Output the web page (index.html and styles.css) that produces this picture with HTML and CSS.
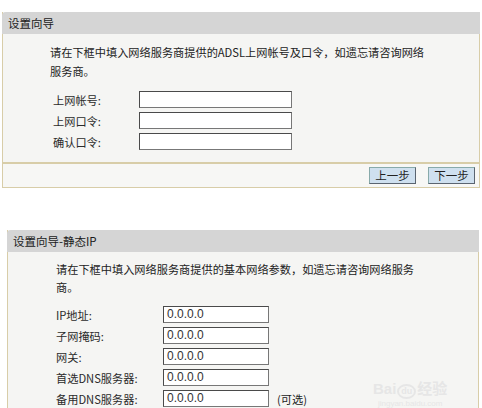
FILE: index.html
```html
<!DOCTYPE html>
<html lang="zh-CN">
<head>
<meta charset="utf-8">
<title>设置向导</title>
<link rel="stylesheet" href="styles.css">
</head>
<body>
<div class="page">
  <section class="panel panel-a">
    <div class="panel-head">设置向导</div>
    <div class="panel-body body-a">
      <p class="intro">请在下框中填入网络服务商提供的ADSL上网帐号及口令，如遗忘请咨询网络<br>服务商。</p>
      <div class="rows rows-a">
        <div class="row"><span class="label">上网帐号:</span><span class="field field-a"></span></div>
        <div class="row"><span class="label">上网口令:</span><span class="field field-a"></span></div>
        <div class="row"><span class="label">确认口令:</span><span class="field field-a"></span></div>
      </div>
    </div>
    <div class="panel-foot">
      <button class="btn">上一步</button>
      <button class="btn">下一步</button>
    </div>
  </section>

  <section class="panel panel-b">
    <div class="panel-head">设置向导-静态IP</div>
    <div class="panel-body body-b">
      <p class="intro intro-b">请在下框中填入网络服务商提供的基本网络参数，如遗忘请咨询网络服务<br>商。</p>
      <div class="rows rows-b">
        <div class="row"><span class="label label-b">IP地址:</span><span class="field field-b">0.0.0.0</span></div>
        <div class="row"><span class="label label-b">子网掩码:</span><span class="field field-b">0.0.0.0</span></div>
        <div class="row"><span class="label label-b">网关:</span><span class="field field-b">0.0.0.0</span></div>
        <div class="row"><span class="label label-b">首选DNS服务器:</span><span class="field field-b">0.0.0.0</span></div>
        <div class="row"><span class="label label-b">备用DNS服务器:</span><span class="field field-b">0.0.0.0</span><span class="note">(可选)</span></div>
      </div>
      <div class="watermark">
        <span class="wm-logo">Bai<span class="wm-du">du</span>经验</span>
        <span class="wm-url">jingyan.baidu.com</span>
      </div>
    </div>
  </section>
</div>
</body>
</html>
```

FILE: styles.css
```css
* { box-sizing: border-box; }
html, body {
  margin: 0;
  padding: 0;
  background: #ffffff;
  overflow: hidden;
}
body {
  font-family: "Noto Sans CJK SC", "Noto Sans", sans-serif;
  font-size: 11.2px;
  color: #222;
  width: 482px;
  height: 408px;
}
.page {
  display: flex;
  flex-direction: column;
}
.panel {
  border: 1px solid #d8cda8;
  border-top: none;
  background: #f5f5f3;
}
.panel-a {
  margin: 12px 2px 0 2px;
}
.panel-b {
  margin: 42px 3px 0 7px;
  height: 178px;
  position: relative;
  border-bottom: none;
}
.panel-head {
  height: 22px;
  background: #d5d5d5;
  border-radius: 4px 0 0 0;
  margin: 0 -1px;
  padding-left: 6px;
  line-height: 22px;
  font-size: 11.5px;
  color: #1a1a1a;
}
.panel-body {
  padding: 9px 0 0 47px;
}
.body-a {
  height: 128px;
}
.body-b {
  padding: 8px 0 0 48px;
}
.intro {
  margin: 0;
  line-height: 19px;
}
.intro-b {
  line-height: 18px;
}
.rows {
  display: flex;
  flex-direction: column;
  gap: 4px;
}
.rows-a {
  margin-top: 10px;
  padding-left: 3px;
}
.rows-b {
  margin-top: 10px;
}
.row {
  display: flex;
  align-items: center;
  height: 17px;
}
.label {
  width: 86px;
  color: #2a2a2a;
}
.label-b {
  width: 107px;
}
.field {
  display: block;
  height: 17px;
  background: #ffffff;
  border: 1px solid #4a4a4a;
  border-right-color: #777;
  border-bottom-color: #777;
}
.field-a {
  width: 153px;
}
.field-b {
  width: 106px;
  padding-left: 3px;
  font-family: "Liberation Sans", Arial, sans-serif;
  font-size: 12px;
  line-height: 15px;
  color: #333;
}
.note {
  margin-left: 8px;
}
.panel-foot {
  height: 25px;
  border-top: 2px solid #d8cda8;
  background: #f7f7f5;
  display: flex;
  justify-content: flex-end;
  align-items: center;
  gap: 12px;
  padding-right: 4px;
}
.btn {
  width: 47px;
  height: 17px;
  padding: 0;
  margin: 0;
  background: #cfe0ef;
  border: 1px solid #5a6470;
  border-top-color: #8aa;
  border-left-color: #8aa;
  font-family: "Noto Sans CJK SC", sans-serif;
  font-size: 11.5px;
  line-height: 15px;
  color: #222;
}
.watermark {
  position: absolute;
  left: 365px;
  top: 150px;
  display: flex;
  flex-direction: column;
  align-items: center;
  color: #e6e6e6;
}
.wm-logo {
  font-family: "Liberation Sans", "Noto Sans CJK SC", sans-serif;
  font-size: 15px;
  font-weight: bold;
  line-height: 18px;
}
.wm-du {
  display: inline-block;
  border: 2px solid #e6e6e6;
  border-radius: 50%;
  font-size: 9px;
  padding: 0 2px;
  margin: 0 1px;
  line-height: 11px;
}
.wm-url {
  font-family: "Liberation Sans", sans-serif;
  font-size: 8px;
  line-height: 10px;
}
```
